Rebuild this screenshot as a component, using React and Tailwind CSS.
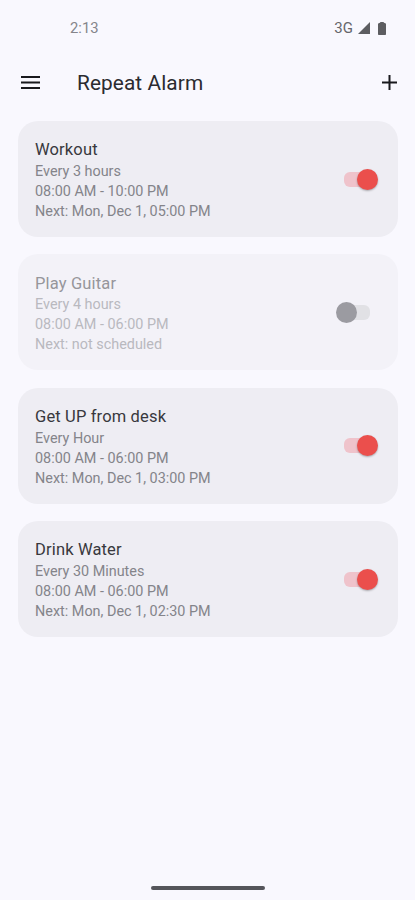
import { useState } from "react";
import clsx from "clsx";

const initialAlarms = [
  {
    id: 1,
    name: "Workout",
    repeat: "Every 3 hours",
    range: "08:00 AM - 10:00 PM",
    next: "Mon, Dec 1, 05:00 PM",
    enabled: true,
  },
  {
    id: 2,
    name: "Play Guitar",
    repeat: "Every 4 hours",
    range: "08:00 AM - 06:00 PM",
    next: "not scheduled",
    enabled: false,
  },
  {
    id: 3,
    name: "Get UP from desk",
    repeat: "Every Hour",
    range: "08:00 AM - 06:00 PM",
    next: "Mon, Dec 1, 03:00 PM",
    enabled: true,
  },
  {
    id: 4,
    name: "Drink Water",
    repeat: "Every 30 Minutes",
    range: "08:00 AM - 06:00 PM",
    next: "Mon, Dec 1, 02:30 PM",
    enabled: true,
  },
];

const StatusBar = () => (
  <div className="flex h-14 items-center justify-between pl-[70px] pr-[29px]">
    <span className="text-[14.8px] text-[#85858b]">2:13</span>
    <div className="flex items-center">
      <span className="text-[15px] text-[#66666b]">3G</span>
      <svg className="ml-[5px] h-[12px] w-[12px]" viewBox="0 0 12 12" fill="#5d5d61">
        <path d="M12 0v12H0z" />
      </svg>
      <svg className="ml-[8px] h-[13px] w-[8px]" viewBox="0 0 8 13" fill="#5d5d61">
        <path d="M2.500 0h3L6 .8l1.300.5a1 1 0 0 1 .7.900V12.200a.8.8 0 0 1-.8.8H.8a.8.8 0 0 1-.8-.8V2.200a1 1 0 0 1 .7-.9L2 .8z" />
      </svg>
    </div>
  </div>
);

const Header = () => (
  <header className="flex h-[53px] items-center pl-[21px] pr-[18px]">
    <button type="button" aria-label="Menu">
      <svg className="h-[14px] w-[19px]" viewBox="0 0 19 14" fill="#19191d">
        <path d="M0 0h19v2H0zM0 5.500h19v2H0zM0 11h19v2H0z" />
      </svg>
    </button>
    <h1 className="ml-[37px] grow pt-[3px] text-[20.8px] tracking-[0.1px] text-[#2b2b30]">
      Repeat Alarm
    </h1>
    <button type="button" aria-label="Add alarm">
      <svg className="h-[15px] w-[15px]" viewBox="0 0 15 15" fill="#19191d">
        <path d="M6.500 0h2v6.500H15v2H8.500V15h-2V8.500H0v-2h6.500z" />
      </svg>
    </button>
  </header>
);

const Toggle = ({ checked, onChange }) => (
  <button
    type="button"
    role="switch"
    aria-checked={checked}
    onClick={onChange}
    className="relative flex h-[21px] w-[42px] items-center justify-center"
  >
    <span
      className={clsx(
        "h-[15px] w-[26px] rounded-[6px]",
        checked ? "bg-[#efc3cb]" : "bg-[#e1e1e5]"
      )}
    />
    <span
      className={clsx(
        "absolute top-0 size-[21px] rounded-full",
        checked
          ? "right-0 bg-[#eb4f4c] shadow-[0_1px_2px_rgba(0,0,0,0.3)]"
          : "left-0 bg-[#9b9ba1]"
      )}
    />
  </button>
);

const AlarmCard = ({ alarm, onToggle }) => {
  const { name, repeat, range, next, enabled } = alarm;

  return (
    <li
      className={clsx(
        "flex h-[116px] items-center justify-between rounded-[20px] pl-[17px] pr-[20px]",
        enabled ? "bg-[#eeedf3]" : "bg-[#f3f2f8]"
      )}
    >
      <div className="pt-[3px]">
        <h2
          className={clsx(
            "text-[16.5px] leading-[22px] tracking-[0.15px]",
            enabled ? "text-[#38383d]" : "text-[#96969b]"
          )}
        >
          {name}
        </h2>
        <div
          className={clsx(
            "pt-[0.5px] text-[14.4px] leading-5",
            enabled ? "text-[#84848a]" : "text-[#b9b9bf]"
          )}
        >
          <p>{repeat}</p>
          <p>{range}</p>
          <p>Next: {next}</p>
        </div>
      </div>
      <Toggle checked={enabled} onChange={() => onToggle(alarm.id)} />
    </li>
  );
};

export default function App() {
  const [alarms, setAlarms] = useState(initialAlarms);

  const handleToggle = (id) => {
    setAlarms(
      alarms.map((a) => (a.id === id ? { ...a, enabled: !a.enabled } : a))
    );
  };

  return (
    <div className="flex h-[900px] w-[415px] flex-col bg-[#f9f8fe] font-[Roboto,sans-serif]">
      <StatusBar />
      <Header />
      <ul className="flex grow flex-col gap-[17.4px] pl-[18px] pr-[17px] pt-[12px]">
        {alarms.map((alarm) => (
          <AlarmCard key={alarm.id} alarm={alarm} onToggle={handleToggle} />
        ))}
      </ul>
      <div className="flex justify-center pb-[10px]">
        <div className="h-[4px] w-[114px] rounded-full bg-[#55555b]" />
      </div>
    </div>
  );
}
